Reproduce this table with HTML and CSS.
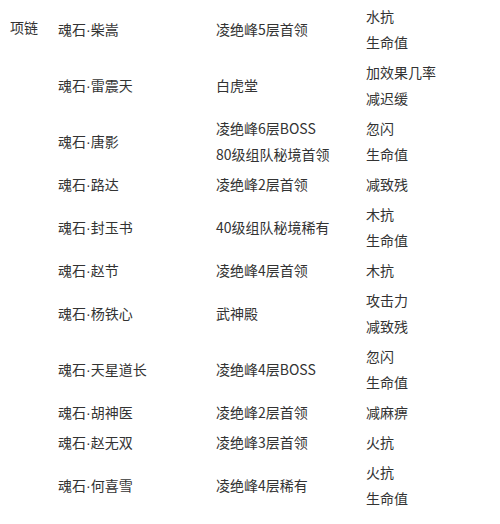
FILE: index.html
```html
<!DOCTYPE html>
<html lang="zh-CN">
<head>
<meta charset="utf-8">
<title>项链魂石</title>
<link rel="stylesheet" href="styles.css">
</head>
<body>
<table class="gems">
  <colgroup>
    <col class="col-slot">
    <col class="col-name">
    <col class="col-src">
    <col class="col-attr">
  </colgroup>
  <tbody>
    <tr>
      <td class="slot">项链</td>
      <td>魂石<span class="dot">·</span>柴嵩</td>
      <td>凌绝峰5层首领</td>
      <td>水抗<br>生命值</td>
    </tr>
    <tr>
      <td></td>
      <td>魂石<span class="dot">·</span>雷震天</td>
      <td>白虎堂</td>
      <td>加效果几率<br>减迟缓</td>
    </tr>
    <tr>
      <td></td>
      <td>魂石<span class="dot">·</span>唐影</td>
      <td>凌绝峰6层BOSS<br>80级组队秘境首领</td>
      <td>忽闪<br>生命值</td>
    </tr>
    <tr>
      <td></td>
      <td>魂石<span class="dot">·</span>路达</td>
      <td>凌绝峰2层首领</td>
      <td>减致残</td>
    </tr>
    <tr>
      <td></td>
      <td>魂石<span class="dot">·</span>封玉书</td>
      <td>40级组队秘境稀有</td>
      <td>木抗<br>生命值</td>
    </tr>
    <tr>
      <td></td>
      <td>魂石<span class="dot">·</span>赵节</td>
      <td>凌绝峰4层首领</td>
      <td>木抗</td>
    </tr>
    <tr>
      <td></td>
      <td>魂石<span class="dot">·</span>杨铁心</td>
      <td>武神殿</td>
      <td>攻击力<br>减致残</td>
    </tr>
    <tr>
      <td></td>
      <td>魂石<span class="dot">·</span>天星道长</td>
      <td>凌绝峰4层BOSS</td>
      <td>忽闪<br>生命值</td>
    </tr>
    <tr>
      <td></td>
      <td>魂石<span class="dot">·</span>胡神医</td>
      <td>凌绝峰2层首领</td>
      <td>减麻痹</td>
    </tr>
    <tr>
      <td></td>
      <td>魂石<span class="dot">·</span>赵无双</td>
      <td>凌绝峰3层首领</td>
      <td>火抗</td>
    </tr>
    <tr>
      <td></td>
      <td>魂石<span class="dot">·</span>何喜雪</td>
      <td>凌绝峰4层稀有</td>
      <td>火抗<br>生命值</td>
    </tr>
  </tbody>
</table>
</body>
</html>
```

FILE: styles.css
```css
html, body {
  margin: 0;
  padding: 0;
  background: #ffffff;
}

body {
  font-family: "Noto Sans CJK SC", "Microsoft YaHei", sans-serif;
  font-size: 14px;
  color: #333333;
}

.gems {
  border-collapse: collapse;
  table-layout: fixed;
  width: 500px;
  margin-top: 1px;
}

.col-slot { width: 58px; }
.col-name { width: 158px; }
.col-src { width: 150px; }
.col-attr { width: 134px; }

.gems td {
  padding: 2px 0;
  line-height: 26px;
  vertical-align: middle;
  white-space: nowrap;
}

.gems td.slot {
  padding-left: 10px;
  padding-bottom: 6px;
}

.dot {
  font-family: "Liberation Sans", Arial, sans-serif;
  line-height: 1;
}
```
